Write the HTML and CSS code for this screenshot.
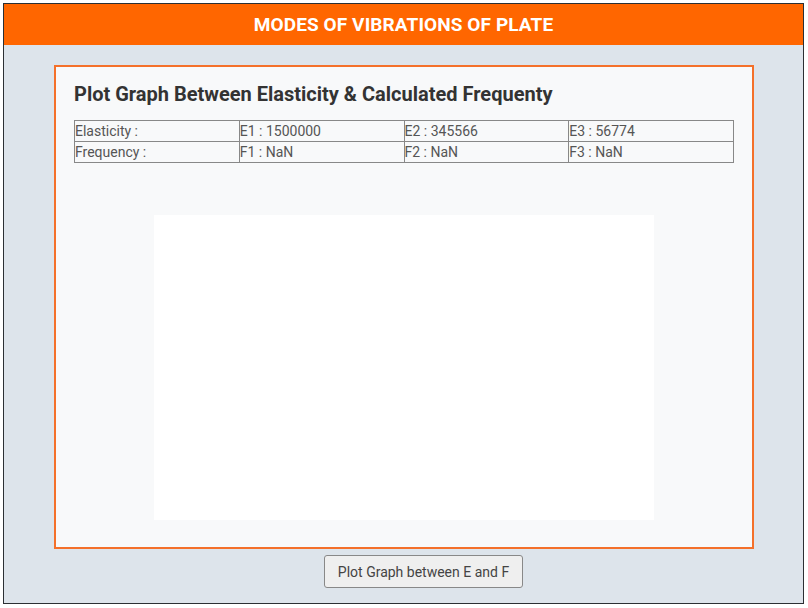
FILE: index.html
```html
<!DOCTYPE html>
<html>
<head>
<meta charset="utf-8">
<link rel="stylesheet" href="styles.css">
</head>
<body>
<div class="frame">
  <header class="topbar">MODES OF VIBRATIONS OF PLATE</header>
  <main class="main">
    <section class="card">
      <h2 class="title">Plot Graph Between Elasticity &amp; Calculated Frequenty</h2>
      <table class="data">
        <tr><td>Elasticity :</td><td>E1 : 1500000</td><td>E2 : 345566</td><td>E3 : 56774</td></tr>
        <tr><td>Frequency :</td><td>F1 : NaN</td><td>F2 : NaN</td><td>F3 : NaN</td></tr>
      </table>
      <div class="canvas"></div>
    </section>
    <div class="actions">
      <button class="btn">Plot Graph between E and F</button>
    </div>
  </main>
</div>
</body>
</html>
```

FILE: styles.css
```css
html, body { margin: 0; padding: 0; background: #ffffff; }
body { font-family: Roboto, "Liberation Sans", sans-serif; }
.frame {
  margin: 3px 0 0 3px;
  width: 799px;
  height: 599px;
  border: 1px solid #2b2f33;
  background: #dde4eb;
  display: flex;
  flex-direction: column;
}
.topbar {
  height: 41px;
  line-height: 41px;
  background: #ff6600;
  color: #ffffff;
  text-align: center;
  font-weight: 700;
  font-size: 19px;
  letter-spacing: 0.1px;
}
.main {
  padding: 20px 0 0 50px;
  display: flex;
  flex-direction: column;
}
.card {
  box-sizing: border-box;
  width: 700px;
  height: 484px;
  border: 2px solid #f4702a;
  background: #f8f9fa;
  padding: 0 18px;
  display: flex;
  flex-direction: column;
}
.title {
  margin: 15px 0 0 0;
  font-size: 20px;
  line-height: 24px;
  font-weight: 700;
  color: #333333;
}
.data {
  margin-top: 14px;
  width: 660px;
  border-collapse: collapse;
  border: 1px solid #333333;
  table-layout: fixed;
  font-size: 14px;
  color: #555555;
}
.data td {
  border: 1px solid #888888;
  padding: 0;
  height: 20px;
  line-height: 20px;
  font-weight: 400;
}
.canvas {
  width: 500px;
  height: 305px;
  background: #ffffff;
  margin: 52px auto 0 auto;
}
.actions {
  padding: 6px 0 0 270px;
}
.btn {
  box-sizing: border-box;
  width: 199px;
  height: 33px;
  font-family: Roboto, "Liberation Sans", sans-serif;
  font-size: 14px;
  color: #444444;
  background: #efefef;
  border: 1px solid #888888;
  border-radius: 3px;
}
```
